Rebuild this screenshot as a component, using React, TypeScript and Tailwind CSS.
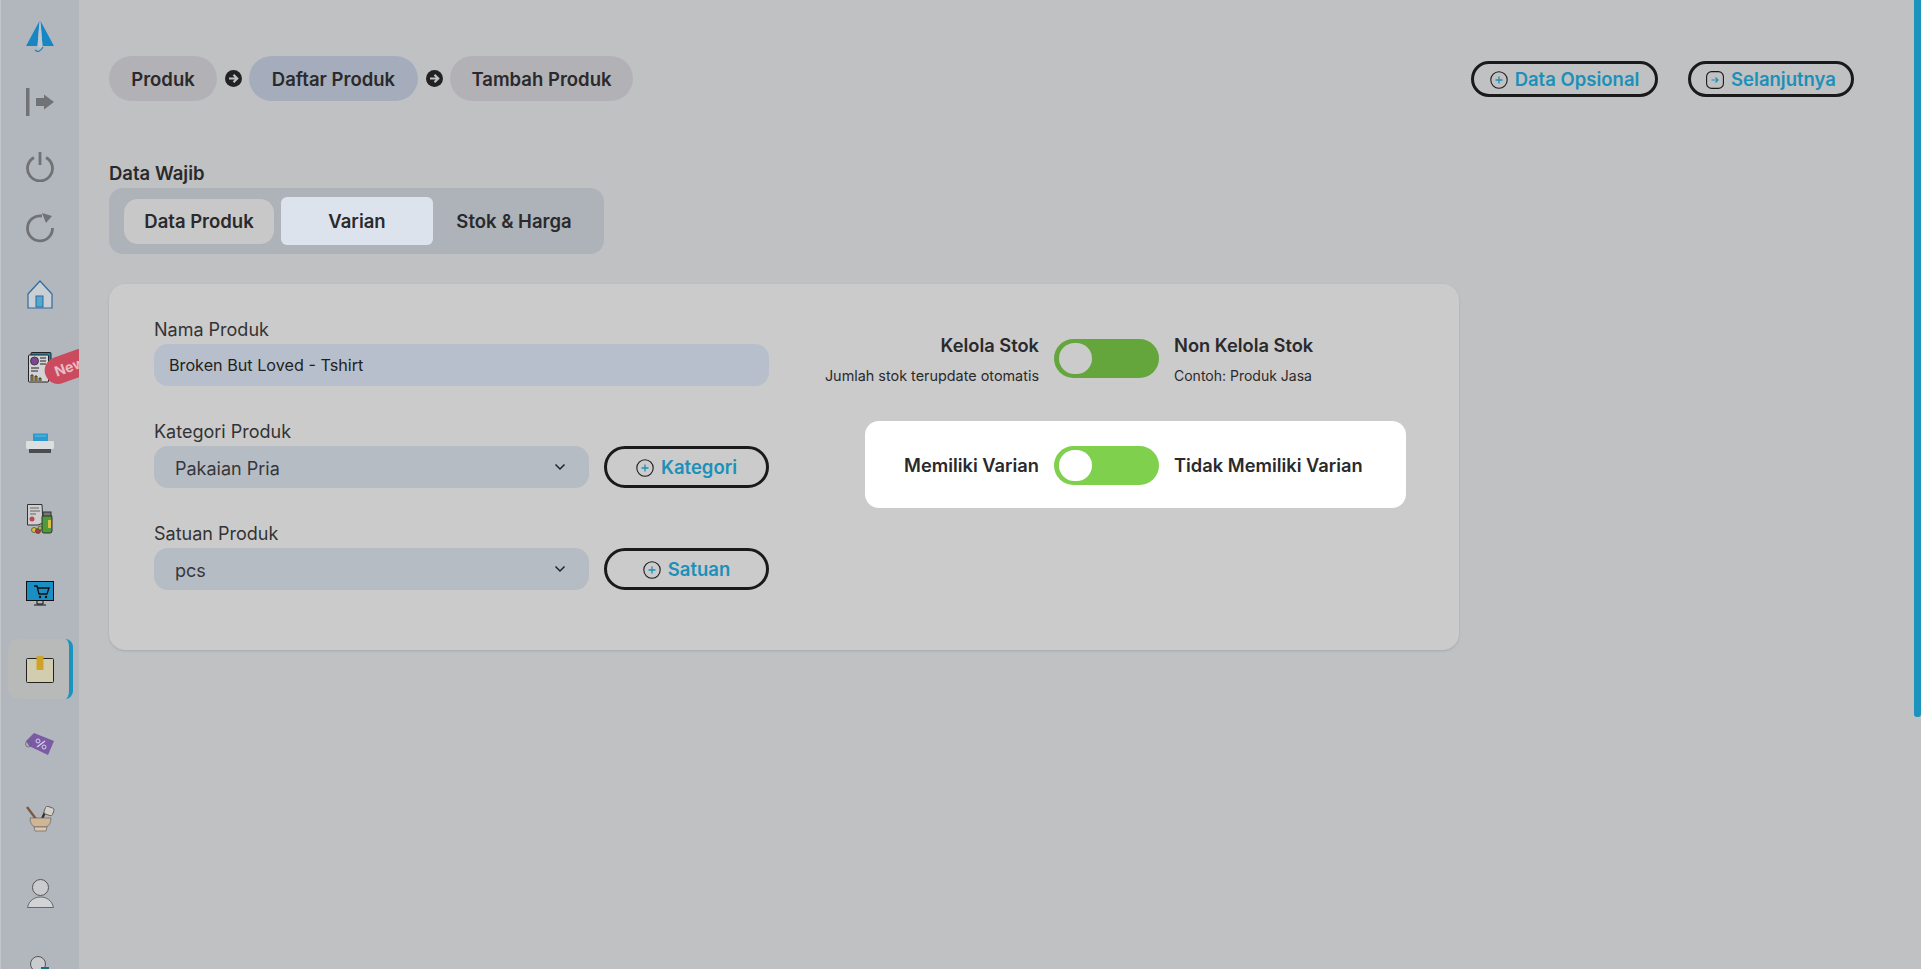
const LogoIcon = () => (
  <svg width="30" height="34" viewBox="0 0 30 34">
    <path d="M14.5 1 L1 26 L12.5 26 Z" fill="#1686c4" />
    <path d="M15.5 1 L29 26 L17.5 26 Z" fill="#1686c4" />
    <path d="M14.5 3 L15.5 3 L17.5 26 L15 29 L12.5 26 Z" fill="#bcc6cc" />
    <path d="M10 30 Q14 34 18 27" fill="none" stroke="#1686c4" strokeWidth="1.2" />
  </svg>
);

const ExitIcon = () => (
  <svg width="30" height="30" viewBox="0 0 30 30">
    <rect x="1" y="1" width="3.5" height="28" fill="#707275" />
    <path d="M11 11 H19 V7.5 L29 15 L19 22.5 V19 H11 Z" fill="#707275" />
  </svg>
);

const PowerIcon = () => (
  <svg width="30" height="30" viewBox="0 0 30 30" fill="none" stroke="#707275" strokeWidth="2.8">
    <path d="M9 5.5 A12.5 12.5 0 1 0 21 5.5" />
    <path d="M15 0 V13" />
  </svg>
);

const RefreshIcon = () => (
  <svg width="30" height="30" viewBox="0 0 30 30" fill="none">
    <path d="M27.5 15 A12.5 12.5 0 1 1 17 3" stroke="#707275" strokeWidth="2.8" />
    <path d="M17 0 L27 3 L21 10 Z" fill="#707275" />
  </svg>
);

const HomeIcon = () => (
  <svg width="26" height="30" viewBox="0 0 26 30">
    <path d="M1 14 L13 1 L25 14 V28 H1 Z" fill="#c9cfd3" stroke="#2f6aa0" strokeWidth="1.2" />
    <rect x="9" y="16" width="7" height="11" fill="#52a9cf" stroke="#2f6aa0" />
  </svg>
);

const ReportIcon = () => (
  <svg width="24" height="31" viewBox="0 0 24 31">
    <rect x="3" y="0.5" width="20" height="27" rx="1" fill="#1c86b0" stroke="#222" />
    <rect x="0.5" y="3" width="20" height="27" rx="1" fill="#d3d3d5" stroke="#222" />
    <circle cx="6.5" cy="9" r="4" fill="#7a4a90" stroke="#222" strokeWidth="0.7" />
    <path d="M12 6 H18 M12 9 H18 M12 12 H18 M3 16 H11 M3 19 H10" stroke="#222" strokeWidth="1" />
    <path d="M3 29 V23 H5 V29 M7 29 V24 H9 V29 M11 29 V26 H13 V29" fill="#b89a3d" stroke="#222" strokeWidth="0.8" />
  </svg>
);

const PrinterIcon = () => (
  <svg width="28" height="20" viewBox="0 0 28 20">
    <rect x="7" y="0.5" width="15" height="8" fill="#2a9bd0" />
    <path d="M9 3 H20" stroke="#6fb9dc" strokeWidth="1" />
    <rect x="0" y="8" width="28" height="8" rx="1" fill="#dcdee0" />
    <rect x="3" y="16" width="22" height="4" fill="#4a4c50" />
  </svg>
);

const DocBottleIcon = () => (
  <svg width="26" height="30" viewBox="0 0 26 30">
    <path d="M0.5 0.5 H15 L16 19 L11 21 H0.5 Z" fill="#cfcfd1" stroke="#333" />
    <path d="M3 4 H12 M3 7 H13 M3 10 H9" stroke="#666" />
    <circle cx="5" cy="15" r="2.5" fill="#b94a55" />
    <rect x="15" y="11" width="10" height="18" rx="2" fill="#4f9a3a" stroke="#333" />
    <rect x="16" y="8" width="8" height="4" fill="#777" stroke="#333" />
    <rect x="21" y="16" width="3" height="8" fill="#d9c143" />
    <circle cx="7" cy="26" r="2.5" fill="#d7c13c" stroke="#333" strokeWidth="0.6" />
    <circle cx="11" cy="27" r="2.5" fill="#b33b3b" stroke="#333" strokeWidth="0.6" />
    <circle cx="13" cy="24" r="2" fill="#a8b83c" stroke="#333" strokeWidth="0.6" />
  </svg>
);

const MonitorIcon = () => (
  <svg width="28" height="25" viewBox="0 0 28 25">
    <rect x="0.5" y="0.5" width="27" height="19" fill="#1b8ec4" stroke="#111" />
    <path d="M8 5 H11 L13 13 H21 L23 7 H12" fill="none" stroke="#111" strokeWidth="1.3" />
    <circle cx="14" cy="16" r="1.2" fill="#111" />
    <circle cx="20" cy="16" r="1.2" fill="#111" />
    <path d="M11 20 V23 H17 V20 M8 24 H20" fill="none" stroke="#111" />
  </svg>
);

const BoxIcon = () => (
  <svg width="28" height="27" viewBox="0 0 28 27">
    <rect x="0.5" y="2.5" width="27" height="24" rx="1" fill="#d3cdb0" stroke="#222" />
    <rect x="10.5" y="0" width="7" height="14" rx="1" fill="#cfa32a" />
  </svg>
);

const TagIcon = () => (
  <svg width="30" height="24" viewBox="0 0 30 24">
    <path d="M1 9 L9 1 L29 9 L23 23 L4 14 Z" fill="#7b5aa6" />
    <circle cx="3.5" cy="12" r="3" fill="none" stroke="#666" strokeWidth="0.8" />
    <path d="M12 15 L20 9" stroke="#d9d2e6" strokeWidth="1.4" />
    <circle cx="13" cy="9" r="2" fill="none" stroke="#d9d2e6" />
    <circle cx="19" cy="15" r="2" fill="none" stroke="#d9d2e6" />
  </svg>
);

const MortarIcon = () => (
  <svg width="29" height="26" viewBox="0 0 29 26">
    <path d="M1 1 L10 13" stroke="#7a5a44" strokeWidth="2.4" />
    <path d="M16 13 L20 4" stroke="#333" strokeWidth="2.4" />
    <rect x="18.5" y="1" width="9" height="8" rx="2" fill="#d5d1c9" stroke="#555" strokeWidth="0.8" transform="rotate(20 23 5)" />
    <path d="M4 12 H25 Q25 19 20 21 H9 Q4 19 4 12 Z" fill="#d0b597" stroke="#666" strokeWidth="0.7" />
    <path d="M8 21 H21 L20 25 H9 Z" fill="#dcc8b0" stroke="#666" strokeWidth="0.7" />
  </svg>
);

const UserIcon = () => (
  <svg width="27" height="29" viewBox="0 0 27 29">
    <circle cx="13.5" cy="8.5" r="8" fill="#c9cbce" stroke="#555" />
    <path d="M0.5 28.5 C2 21 8 18 13.5 18 C19 18 25 21 26.5 28.5 Z" fill="#d2d3d5" stroke="#666" />
  </svg>
);

const UserGearIcon = () => (
  <svg width="20" height="28" viewBox="0 0 20 28">
    <circle cx="8" cy="8" r="7.5" fill="#c9cbce" stroke="#555" />
    <path d="M11 11 H19 V22 H11 Z" fill="#1d6d80" />
  </svg>
);

const ArrowCircle = () => (
  <svg width="17" height="17" viewBox="0 0 17 17">
    <circle cx="8.5" cy="8.5" r="8.5" fill="#222" />
    <path d="M4 8.5 H12 M8.5 4.8 L12.2 8.5 L8.5 12.2" fill="none" stroke="#c0c1c3" strokeWidth="2.2" />
  </svg>
);

const PlusCircle = () => (
  <svg width="18" height="18" viewBox="0 0 18 18" fill="none">
    <circle cx="9" cy="9" r="8.2" stroke="#1a1a1a" strokeWidth="1.1" />
    <path d="M9 5.5 V12.5 M5.5 9 H12.5" stroke="#1c90b8" strokeWidth="1.3" />
  </svg>
);

const ArrowSquare = () => (
  <svg width="18" height="18" viewBox="0 0 18 18" fill="none">
    <rect x="0.6" y="0.6" width="16.8" height="16.8" rx="5" stroke="#1a1a1a" strokeWidth="1.1" />
    <path d="M5.5 9 H12 M9.5 6.5 L12 9 L9.5 11.5" stroke="#1c90b8" strokeWidth="1.2" />
  </svg>
);

const Chevron = () => (
  <svg width="12" height="8" viewBox="0 0 12 8" fill="none">
    <path d="M1.5 1.5 L6 6 L10.5 1.5" stroke="#222" strokeWidth="1.5" />
  </svg>
);

const navItems = [
  { id: "logo", box: "h-[73px]", icon: <LogoIcon /> },
  { id: "exit", box: "h-[57px]", icon: <ExitIcon /> },
  { id: "power", box: "h-[74px]", icon: <PowerIcon /> },
  { id: "refresh", box: "h-[47px]", icon: <RefreshIcon /> },
  { id: "home", box: "h-[79px] pt-[8px]", icon: <HomeIcon /> },
  { id: "report", box: "h-[75px]", icon: <ReportIcon /> },
  { id: "printer", box: "h-[76px]", icon: <PrinterIcon /> },
  { id: "doc", box: "h-[75px]", icon: <DocBottleIcon /> },
  { id: "monitor", box: "h-[75px]", icon: <MonitorIcon /> },
  { id: "box", box: "h-[75px] pt-[2px]", icon: <BoxIcon /> },
  { id: "tag", box: "h-[75px]", icon: <TagIcon /> },
  { id: "mortar", box: "h-[75px]", icon: <MortarIcon /> },
  { id: "user", box: "h-[74px]", icon: <UserIcon /> },
  { id: "gear", box: "h-[80px]", icon: <UserGearIcon /> },
];

const Sidebar = () => (
  <aside className="relative h-[969px] w-[79px] shrink-0 overflow-hidden border-l border-[#c3c5c8] bg-[#b2b7bd]">
    {navItems.map((item) => (
      <div key={item.id} className={`relative flex items-center justify-center ${item.box}`}>
        {item.id === "box" && (
          <div className="absolute left-[7px] top-[8px] h-[60px] w-[65px] rounded-l-[10px] rounded-r-[8px] border-r-4 border-[#1b93c1] bg-[#b8b9b9]" />
        )}
        <div className="relative">{item.icon}</div>
        {item.id === "report" && (
          <div className="absolute left-[43px] top-[23px] flex h-[27px] w-[50px] -rotate-[20deg] items-center rounded-full bg-[#cc4a5e] pl-[10px] text-[14px] font-bold text-[#e5bcc3]">
            New
          </div>
        )}
      </div>
    ))}
  </aside>
);

const Pill = ({ label, className }: { label: string; className: string }) => (
  <div className={`flex h-[45px] items-center justify-center rounded-full pt-[2px] text-[18.5px] font-semibold text-[#2a2a2c] ${className}`}>
    {label}
  </div>
);

const OutlineButton = ({
  icon,
  label,
  className,
}: {
  icon: React.ReactNode;
  label: string;
  className: string;
}) => (
  <button className={`flex items-center justify-center gap-[7px] rounded-full border-[3px] border-[#1a1a1a] pt-[1px] text-[18.5px] font-semibold text-[#1c90b8] ${className}`}>
    {icon}
    {label}
  </button>
);

const SelectField = ({ label, value, button }: { label: string; value: string; button: string }) => (
  <div className="mt-[33px]">
    <label className="block h-[24px] text-[18px] leading-[26px] text-[#333335]">{label}</label>
    <div className="mt-[3px] flex gap-[15px]">
      <div className="flex h-[42px] w-[435px] items-center justify-between rounded-[14px] bg-[#b6bcc4] pl-[21px] pr-[23px] text-[18px] text-[#36373a]">
        <span className="pt-[2px]">{value}</span>
        <Chevron />
      </div>
      <OutlineButton icon={<PlusCircle />} label={button} className="h-[42px] w-[165px]" />
    </div>
  </div>
);

const Toggle = ({ track, knob }: { track: string; knob: string }) => (
  <div className={`flex h-[39px] w-[105px] shrink-0 items-center rounded-full pl-[5px] ${track}`}>
    <div className={`h-[31px] w-[33px] rounded-full ${knob}`} />
  </div>
);

export default function App() {
  return (
    <div className="flex h-[969px] w-[1921px] overflow-hidden bg-[#c0c1c3] font-['Inter',sans-serif]">
      <Sidebar />
      <main className="w-[1835px] shrink-0 pl-[30px] pr-[60px] pt-[56px]">
        <header className="flex h-[45px] items-center justify-between">
          <div className="flex items-center">
            <Pill label="Produk" className="w-[108px] bg-[#b2b1b6]" />
            <div className="flex w-[32px] justify-center"><ArrowCircle /></div>
            <Pill label="Daftar Produk" className="w-[169px] bg-[#a5adbd]" />
            <div className="flex w-[32px] justify-center"><ArrowCircle /></div>
            <Pill label="Tambah Produk" className="w-[183px] bg-[#b2b1b6]" />
          </div>
          <div className="flex gap-[30px] pt-px">
            <OutlineButton icon={<PlusCircle />} label="Data Opsional" className="h-[36px] w-[187px]" />
            <OutlineButton icon={<ArrowSquare />} label="Selanjutnya" className="h-[36px] w-[166px]" />
          </div>
        </header>

        <h2 className="mt-[60px] h-[24px] text-[18.5px] font-semibold leading-[24px] text-[#2a2a2c]">Data Wajib</h2>
        <div className="mt-[3px] flex h-[66px] w-[495px] items-center gap-[7px] rounded-[14px] bg-[#aeb3ba] pl-[15px] text-[18.5px] font-semibold text-[#2a2a2c]">
          <div className="flex h-[45px] w-[150px] items-center justify-center rounded-[14px] bg-[#c8c8c8] pt-[2px]">Data Produk</div>
          <div className="flex h-[48px] w-[152px] items-center justify-center rounded-[6px] bg-[#dde3ec] pt-[2px]">Varian</div>
          <div className="flex h-[48px] w-[148px] items-center justify-center whitespace-nowrap pt-[2px]">Stok &amp; Harga</div>
        </div>

        <section className="mt-[30px] flex h-[366px] w-[1350px] rounded-[16px] bg-[#cbcbcb] pl-[45px] pt-[33px] shadow-sm">
          <div className="w-[615px]">
            <label className="block h-[24px] text-[18px] leading-[26px] text-[#333335]">Nama Produk</label>
            <div className="mt-[3px] flex h-[42px] items-center rounded-[14px] bg-[#b7bfcd] pl-[15px] text-[16.2px] text-[#1f1f21]">
              Broken But Loved - Tshirt
            </div>
            <SelectField label="Kategori Produk" value="Pakaian Pria" button="Kategori" />
            <SelectField label="Satuan Produk" value="pcs" button="Satuan" />
          </div>

          <div className="ml-[55px] w-[582px] pt-[15px]">
            <div className="flex items-start">
              <div className="w-[215px] text-right">
                <p className="h-[24px] text-[18.3px] font-semibold leading-[26px] text-[#2a2a2c]">Kelola Stok</p>
                <p className="mt-[10px] h-[20px] whitespace-nowrap text-[14.4px] leading-[20px] text-[#2a2a2c]">Jumlah stok terupdate otomatis</p>
              </div>
              <div className="ml-[15px] mt-[7px]">
                <Toggle track="bg-[#65a63c]" knob="bg-[#cbcbcb]" />
              </div>
              <div className="ml-[15px]">
                <p className="h-[24px] text-[18.3px] font-semibold leading-[26px] text-[#2a2a2c]">Non Kelola Stok</p>
                <p className="mt-[10px] h-[20px] text-[14px] leading-[20px] text-[#2a2a2c]">Contoh: Produk Jasa</p>
              </div>
            </div>
            <div className="ml-[41px] mt-[35px] flex h-[87px] w-[541px] items-center rounded-[14px] bg-white pt-[2px] text-[18.3px] font-semibold text-[#2a2a2c]">
              <span className="w-[174px] text-right">Memiliki Varian</span>
              <div className="ml-[15px]">
                <Toggle track="bg-[#7fd14d]" knob="bg-white" />
              </div>
              <span className="ml-[15px]">Tidak Memiliki Varian</span>
            </div>
          </div>
        </section>
      </main>
      <div className="h-[717px] w-[7px] shrink-0 rounded-b-[3px] bg-[#1b93bd]" />
    </div>
  );
}
